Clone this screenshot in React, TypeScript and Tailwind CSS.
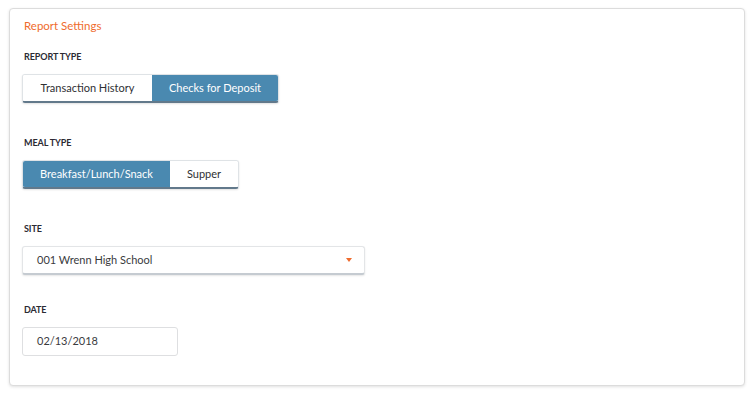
const font = { fontFamily: 'Lato, "Open Sans", sans-serif' }

function Label({ children }: { children: string }) {
  return <div className="text-[9px] font-bold leading-[12px] text-[#2b2b33] tracking-[-0.1px]">{children}</div>
}

function Toggle({ options, active }: { options: { label: string; w: string }[]; active: number }) {
  return (
    <div className="mt-[11px] flex w-fit overflow-hidden rounded-[3px] border border-[#dfe3e6] border-b-2 border-b-[#62798b] shadow-[0_1px_2px_rgba(0,0,0,0.12)]">
      {options.map((o, i) => (
        <div
          key={o.label}
          className={`${o.w} flex h-[26px] items-center justify-center text-[11px] ${
            i === active ? 'bg-[#4a89b0] text-white' : 'bg-white text-[#2f3033]'
          }`}
        >
          {o.label}
        </div>
      ))}
    </div>
  )
}

export default function App() {
  return (
    <div className="h-[393px] w-[754px] bg-white pl-[9px] pr-[9px] pt-[8px]" style={font}>
      <div className="rounded-[4px] border border-[#dcdcdc] bg-white px-[12px] pb-[29px] pt-[9px] shadow-[0_1px_3px_rgba(0,0,0,0.12)]">
        <div className="pl-[2px] text-[11.5px] leading-[16px] text-[#ef6b2d]">Report Settings</div>

        <div className="mt-[17px] pl-[2px]">
          <Label>REPORT TYPE</Label>
        </div>
        <Toggle
          active={1}
          options={[
            { label: 'Transaction History', w: 'w-[129px]' },
            { label: 'Checks for Deposit', w: 'w-[126px]' },
          ]}
        />

        <div className="mt-[34px] pl-[2px]">
          <Label>MEAL TYPE</Label>
        </div>
        <Toggle
          active={0}
          options={[
            { label: 'Breakfast/Lunch/Snack', w: 'w-[147px]' },
            { label: 'Supper', w: 'w-[68px]' },
          ]}
        />

        <div className="mt-[34px] pl-[2px]">
          <Label>SITE</Label>
        </div>
        <div className="mt-[11px] flex h-[29px] w-[343px] items-center justify-between rounded-[3px] border border-[#e3e5e7] border-b-2 border-b-[#c5cbd1] bg-white pl-[14px] pr-[12px] text-[11px] text-[#3a3b3e] shadow-[0_1px_2px_rgba(0,0,0,0.1)]">
          <span>001 Wrenn High School</span>
          <svg width="6" height="4" viewBox="0 0 6 4">
            <path d="M0 0h6L3 4z" fill="#ef6b2d" />
          </svg>
        </div>

        <div className="mt-[29px] pl-[2px]">
          <Label>DATE</Label>
        </div>
        <div className="mt-[11px] flex h-[29px] w-[156px] items-center rounded-[3px] border border-[#dedfe1] bg-white pl-[14px] text-[11px] text-[#3a3b3e]">
          02/13/2018
        </div>
      </div>
    </div>
  )
}
